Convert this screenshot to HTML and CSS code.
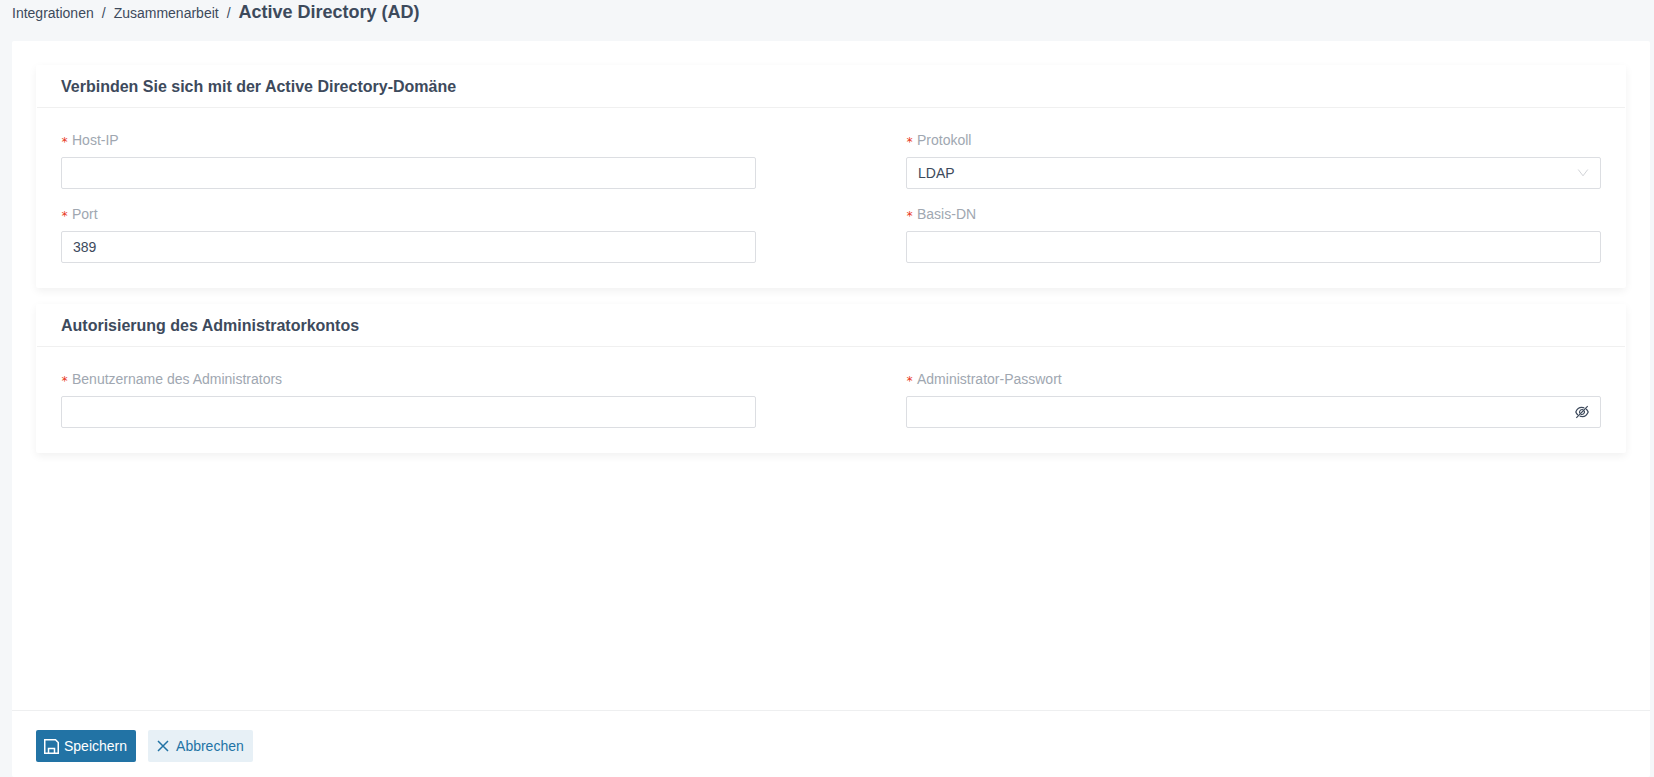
FILE: index.html
```html
<!DOCTYPE html>
<html lang="de">
<head>
<meta charset="utf-8">
<meta name="viewport" content="width=device-width, initial-scale=1">
<title>Active Directory (AD)</title>
<link rel="stylesheet" href="styles.css">
</head>
<body>
<nav class="breadcrumb" aria-label="Breadcrumb">
  <a class="crumb" href="#">Integrationen</a>
  <span class="separator">/</span>
  <a class="crumb" href="#">Zusammenarbeit</a>
  <span class="separator">/</span>
  <h1 class="page-title">Active Directory (AD)</h1>
</nav>
<form class="panel">
  <div class="panel-content">
    <section class="card">
      <h2 class="card-title">Verbinden Sie sich mit der Active Directory-Domäne</h2>
      <div class="card-body">
        <div class="field">
          <label class="label" for="host">Host-IP</label>
          <input class="control" id="host" type="text">
        </div>
        <div class="field">
          <label class="label" for="protocol">Protokoll</label>
          <div class="control-wrap">
            <select class="control" id="protocol"><option>LDAP</option><option>LDAPS</option></select>
            <svg class="suffix chevron" viewBox="0 0 12 12" aria-hidden="true"><path d="M1.200 2.500 6 8.800l4.800-6.300"/></svg>
          </div>
        </div>
        <div class="field">
          <label class="label" for="port">Port</label>
          <input class="control" id="port" type="text" value="389">
        </div>
        <div class="field">
          <label class="label" for="base-dn">Basis-DN</label>
          <input class="control" id="base-dn" type="text">
        </div>
      </div>
    </section>
    <section class="card">
      <h2 class="card-title">Autorisierung des Administratorkontos</h2>
      <div class="card-body">
        <div class="field">
          <label class="label" for="admin-user">Benutzername des Administrators</label>
          <input class="control" id="admin-user" type="text">
        </div>
        <div class="field">
          <label class="label" for="admin-password">Administrator-Passwort</label>
          <div class="control-wrap">
            <input class="control" id="admin-password" type="password">
            <button class="suffix reveal" type="button" aria-label="Passwort anzeigen">
              <svg class="reveal-icon" viewBox="0 0 14 14" aria-hidden="true"><path d="M9.300 2.800C4.800 1.500 2 4 .800 7c.5 1.300 1.200 2.300 2.200 3M4.700 11.100C9.200 12.500 12 10 13.200 7c-.5-1.300-1.200-2.300-2.200-3M4.700 8.300C3.800 6 6 3.900 8.200 4.700M9.300 5.700c.9 2.300-1.300 4.400-3.500 3.600M1.300 12.900 12.700 1.100M5.800 8.300l2.600-2.700"/></svg>
            </button>
          </div>
        </div>
      </div>
    </section>
  </div>
  <footer class="actions">
    <button class="button primary" type="submit">
      <svg class="save-icon" viewBox="0 0 15 15" aria-hidden="true"><path d="M.75.75h10.750l2.750 2.750v10.750H.75zM4.500 14V9.500h6V14"/></svg>
      Speichern
    </button>
    <button class="button secondary" type="button">
      <svg class="close-icon" viewBox="0 0 12 12" aria-hidden="true"><path d="m1 1 10 10M11 1 1 11"/></svg>
      Abbrechen
    </button>
  </footer>
</form>
</body>
</html>
```

FILE: styles.css
```css
* {
  box-sizing: border-box;
}

body {
  display: flex;
  flex-direction: column;
  min-height: 100vh;
  margin: 0;
  padding: 0 4px 0 12px;
  background: #f5f7f9;
  color: #3d4a5c;
  font: 14px/22px "Liberation Sans", Arial, sans-serif;
}

.breadcrumb {
  display: flex;
  align-items: baseline;
  gap: 8px;
  padding-bottom: 17px;
}

.crumb,
.separator {
  color: #3d4a5c;
  text-decoration: none;
}

.page-title {
  margin: 0;
  font-size: 18px;
  line-height: 24px;
}

.panel {
  display: flex;
  flex: 1;
  flex-direction: column;
  border-radius: 2px;
  background: #fff;
}

.panel-content {
  display: flex;
  flex: 1;
  flex-direction: column;
  gap: 16px;
  padding: 24px;
}

.card {
  border: 1px solid #fff;
  border-radius: 2px;
  box-shadow: 0 3px 8px rgba(0, 0, 0, 0.06);
}

.card-title {
  margin: 0;
  padding: 10px 24px 9px;
  border-bottom: 1px solid #f0f0f0;
  font-size: 16px;
  line-height: 22px;
}

.card-body {
  display: grid;
  grid-template-columns: 1fr 1fr;
  gap: 14px 150px;
  padding: 21px 24px 24px;
}

.field {
  display: flex;
  flex-direction: column;
  gap: 6px;
}

.label {
  display: flex;
  gap: 4px;
  height: 22px;
  color: #a0a7b1;
}

.label::before {
  width: 7px;
  color: #e8391d;
  font-family: "DejaVu Sans Mono", monospace;
  font-size: 12px;
  line-height: 26px;
  content: "*";
}

.control-wrap {
  position: relative;
}

.control {
  width: 100%;
  height: 32px;
  padding: 4px 11px;
  border: 1px solid #dcdee2;
  border-radius: 2px;
  background: #fff;
  color: #3d4a5c;
  font: inherit;
  appearance: none;
}

.suffix {
  position: absolute;
  top: 0;
  bottom: 0;
  right: 12px;
  margin: auto 0;
}

.chevron {
  width: 12px;
  height: 12px;
  fill: none;
  stroke: #d2d4d8;
  pointer-events: none;
}

.reveal {
  display: flex;
  align-items: center;
  padding: 0;
  border: 0;
  background: none;
}

.reveal-icon {
  width: 14px;
  height: 14px;
  fill: none;
  stroke: #3d4a5c;
  stroke-width: 1.2;
}

.actions {
  display: flex;
  gap: 12px;
  padding: 19px 24px 15px;
  border-top: 1px solid #eeeff0;
}

.button {
  display: flex;
  align-items: center;
  height: 32px;
  border: 0;
  border-radius: 2px;
  font: inherit;
}

.primary {
  gap: 5px;
  padding: 0 9px 0 8px;
  background: #2273a5;
  color: #fff;
}

.secondary {
  gap: 7px;
  padding: 0 9px;
  background: #e7f0f6;
  color: #2273a5;
}

.save-icon {
  width: 15px;
  height: 15px;
  fill: none;
  stroke: currentColor;
  stroke-width: 1.5;
}

.close-icon {
  width: 12px;
  height: 12px;
  fill: none;
  stroke: currentColor;
  stroke-width: 1.5;
}
```
